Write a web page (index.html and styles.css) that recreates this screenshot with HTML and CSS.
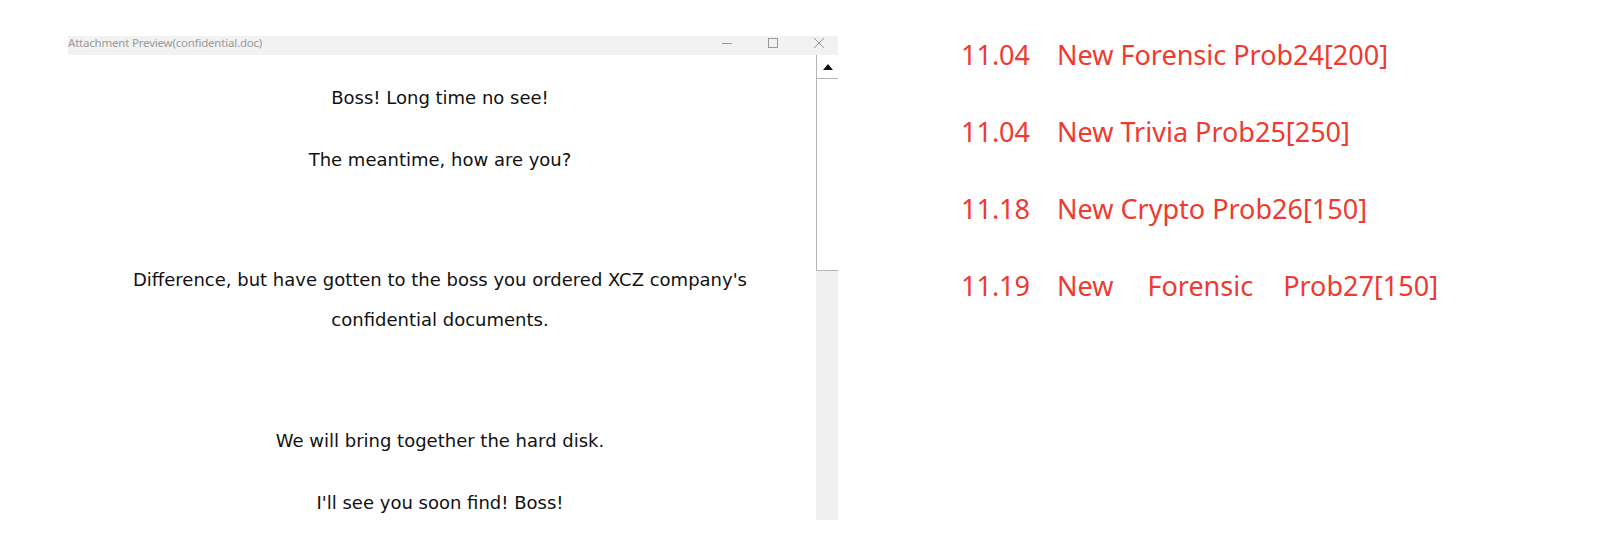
FILE: index.html
```html
<!DOCTYPE html>
<html>
<head>
<meta charset="utf-8">
<link rel="stylesheet" href="styles.css">
</head>
<body>
<div class="page">
  <div class="window">
    <div class="titlebar">
      <span class="title">Attachment Preview(confidential.doc)</span>
      <div class="controls">
        <svg class="ctl" width="12" height="12" viewBox="0 0 12 12"><path d="M1 6.5H11" stroke="#9a9a9a" stroke-width="1"/></svg>
        <svg class="ctl" width="12" height="12" viewBox="0 0 12 12"><rect x="1.5" y="1.5" width="9" height="9" fill="none" stroke="#9a9a9a" stroke-width="1"/></svg>
        <svg class="ctl" width="12" height="12" viewBox="0 0 12 12"><path d="M1 1L11 11M11 1L1 11" stroke="#9a9a9a" stroke-width="1"/></svg>
      </div>
    </div>
    <div class="wbody">
      <div class="doc">
        <p>Boss! Long time no see!</p>
        <p>The meantime, how are you?</p>
        <div class="spacer"></div>
        <p>Difference, but have gotten to the boss you ordered XCZ company's<br>confidential documents.</p>
        <div class="spacer spacer-b"></div>
        <p>We will bring together the hard disk.</p>
        <p>I'll see you soon find! Boss!</p>
      </div>
      <div class="scrollbar">
        <div class="sb-up"><svg width="10" height="6" viewBox="0 0 10 6"><path d="M5 0L10 6H0Z" fill="#111"/></svg></div>
        <div class="sb-thumb"></div>
        <div class="sb-track"></div>
      </div>
    </div>
  </div>
  <div class="news">
    <div class="row"><span class="date">11.04</span><span class="txt">New Forensic Prob24[200]</span></div>
    <div class="row"><span class="date">11.04</span><span class="txt">New Trivia Prob25[250]</span></div>
    <div class="row"><span class="date">11.18</span><span class="txt">New Crypto Prob26[150]</span></div>
    <div class="row"><span class="date">11.19</span><span class="txt spread"><span>New</span><span>Forensic</span><span>Prob27[150]</span></span></div>
  </div>
</div>
</body>
</html>
```

FILE: styles.css
```css
html, body {
  margin: 0;
  padding: 0;
  background: #ffffff;
}
.page {
  display: flex;
  align-items: flex-start;
  padding-left: 68px;
}
.window {
  margin-top: 36px;
  width: 770px;
  height: 484px;
  display: flex;
  flex-direction: column;
  background: #fff;
}
.titlebar {
  height: 19px;
  background: #f2f2f2;
  display: flex;
  align-items: center;
  justify-content: space-between;
}
.title {
  font-family: "Noto Sans", "Open Sans", sans-serif;
  font-size: 11.5px;
  color: #9a9a9a;
  letter-spacing: -0.2px;
  line-height: 19px;
  position: relative;
  top: -3px;
}
.controls {
  display: flex;
  align-items: center;
  gap: 34px;
  padding-right: 13px;
  position: relative;
  top: -3px;
}
.ctl { display: block; }
.wbody {
  flex: 1;
  display: flex;
  min-height: 0;
}
.doc {
  flex: 1;
  padding-top: 23px;
  padding-right: 4px;
  font-family: "DejaVu Sans", "Noto Sans", sans-serif;
  font-size: 18px;
  color: #111;
  text-align: center;
  overflow: hidden;
}
.doc p {
  margin: 0 0 22px 0;
  line-height: 40px;
}
.doc .spacer {
  height: 58px;
}
.doc .spacer-b {
  height: 59px;
}
.scrollbar {
  width: 22px;
  display: flex;
  flex-direction: column;
  background: #f0f0f0;
}
.sb-up {
  height: 24px;
  background: #fff;
  border-left: 1px solid #b5b5b5;
  border-bottom: 1px solid #b5b5b5;
  box-sizing: border-box;
  display: flex;
  align-items: center;
  justify-content: center;
}
.sb-up svg { display: block; }
.sb-thumb {
  height: 192px;
  background: #fff;
  border-left: 1px solid #b5b5b5;
  border-bottom: 1px solid #b5b5b5;
  box-sizing: border-box;
}
.sb-track {
  flex: 1;
  background: #f0f0f0;
}
.news {
  margin-left: 123px;
  margin-top: 35px;
  display: flex;
  flex-direction: column;
  gap: 37px;
  font-family: "Noto Sans", "Open Sans", sans-serif;
  font-size: 27px;
  color: #ee3a2f;
}
.row {
  display: flex;
  line-height: 40px;
  white-space: nowrap;
}
.date {
  width: 96px;
  flex: none;
}
.spread {
  display: flex;
  gap: 0;
}
.spread span:nth-child(1) { margin-right: 34px; }
.spread span:nth-child(2) { margin-right: 30px; }
```
